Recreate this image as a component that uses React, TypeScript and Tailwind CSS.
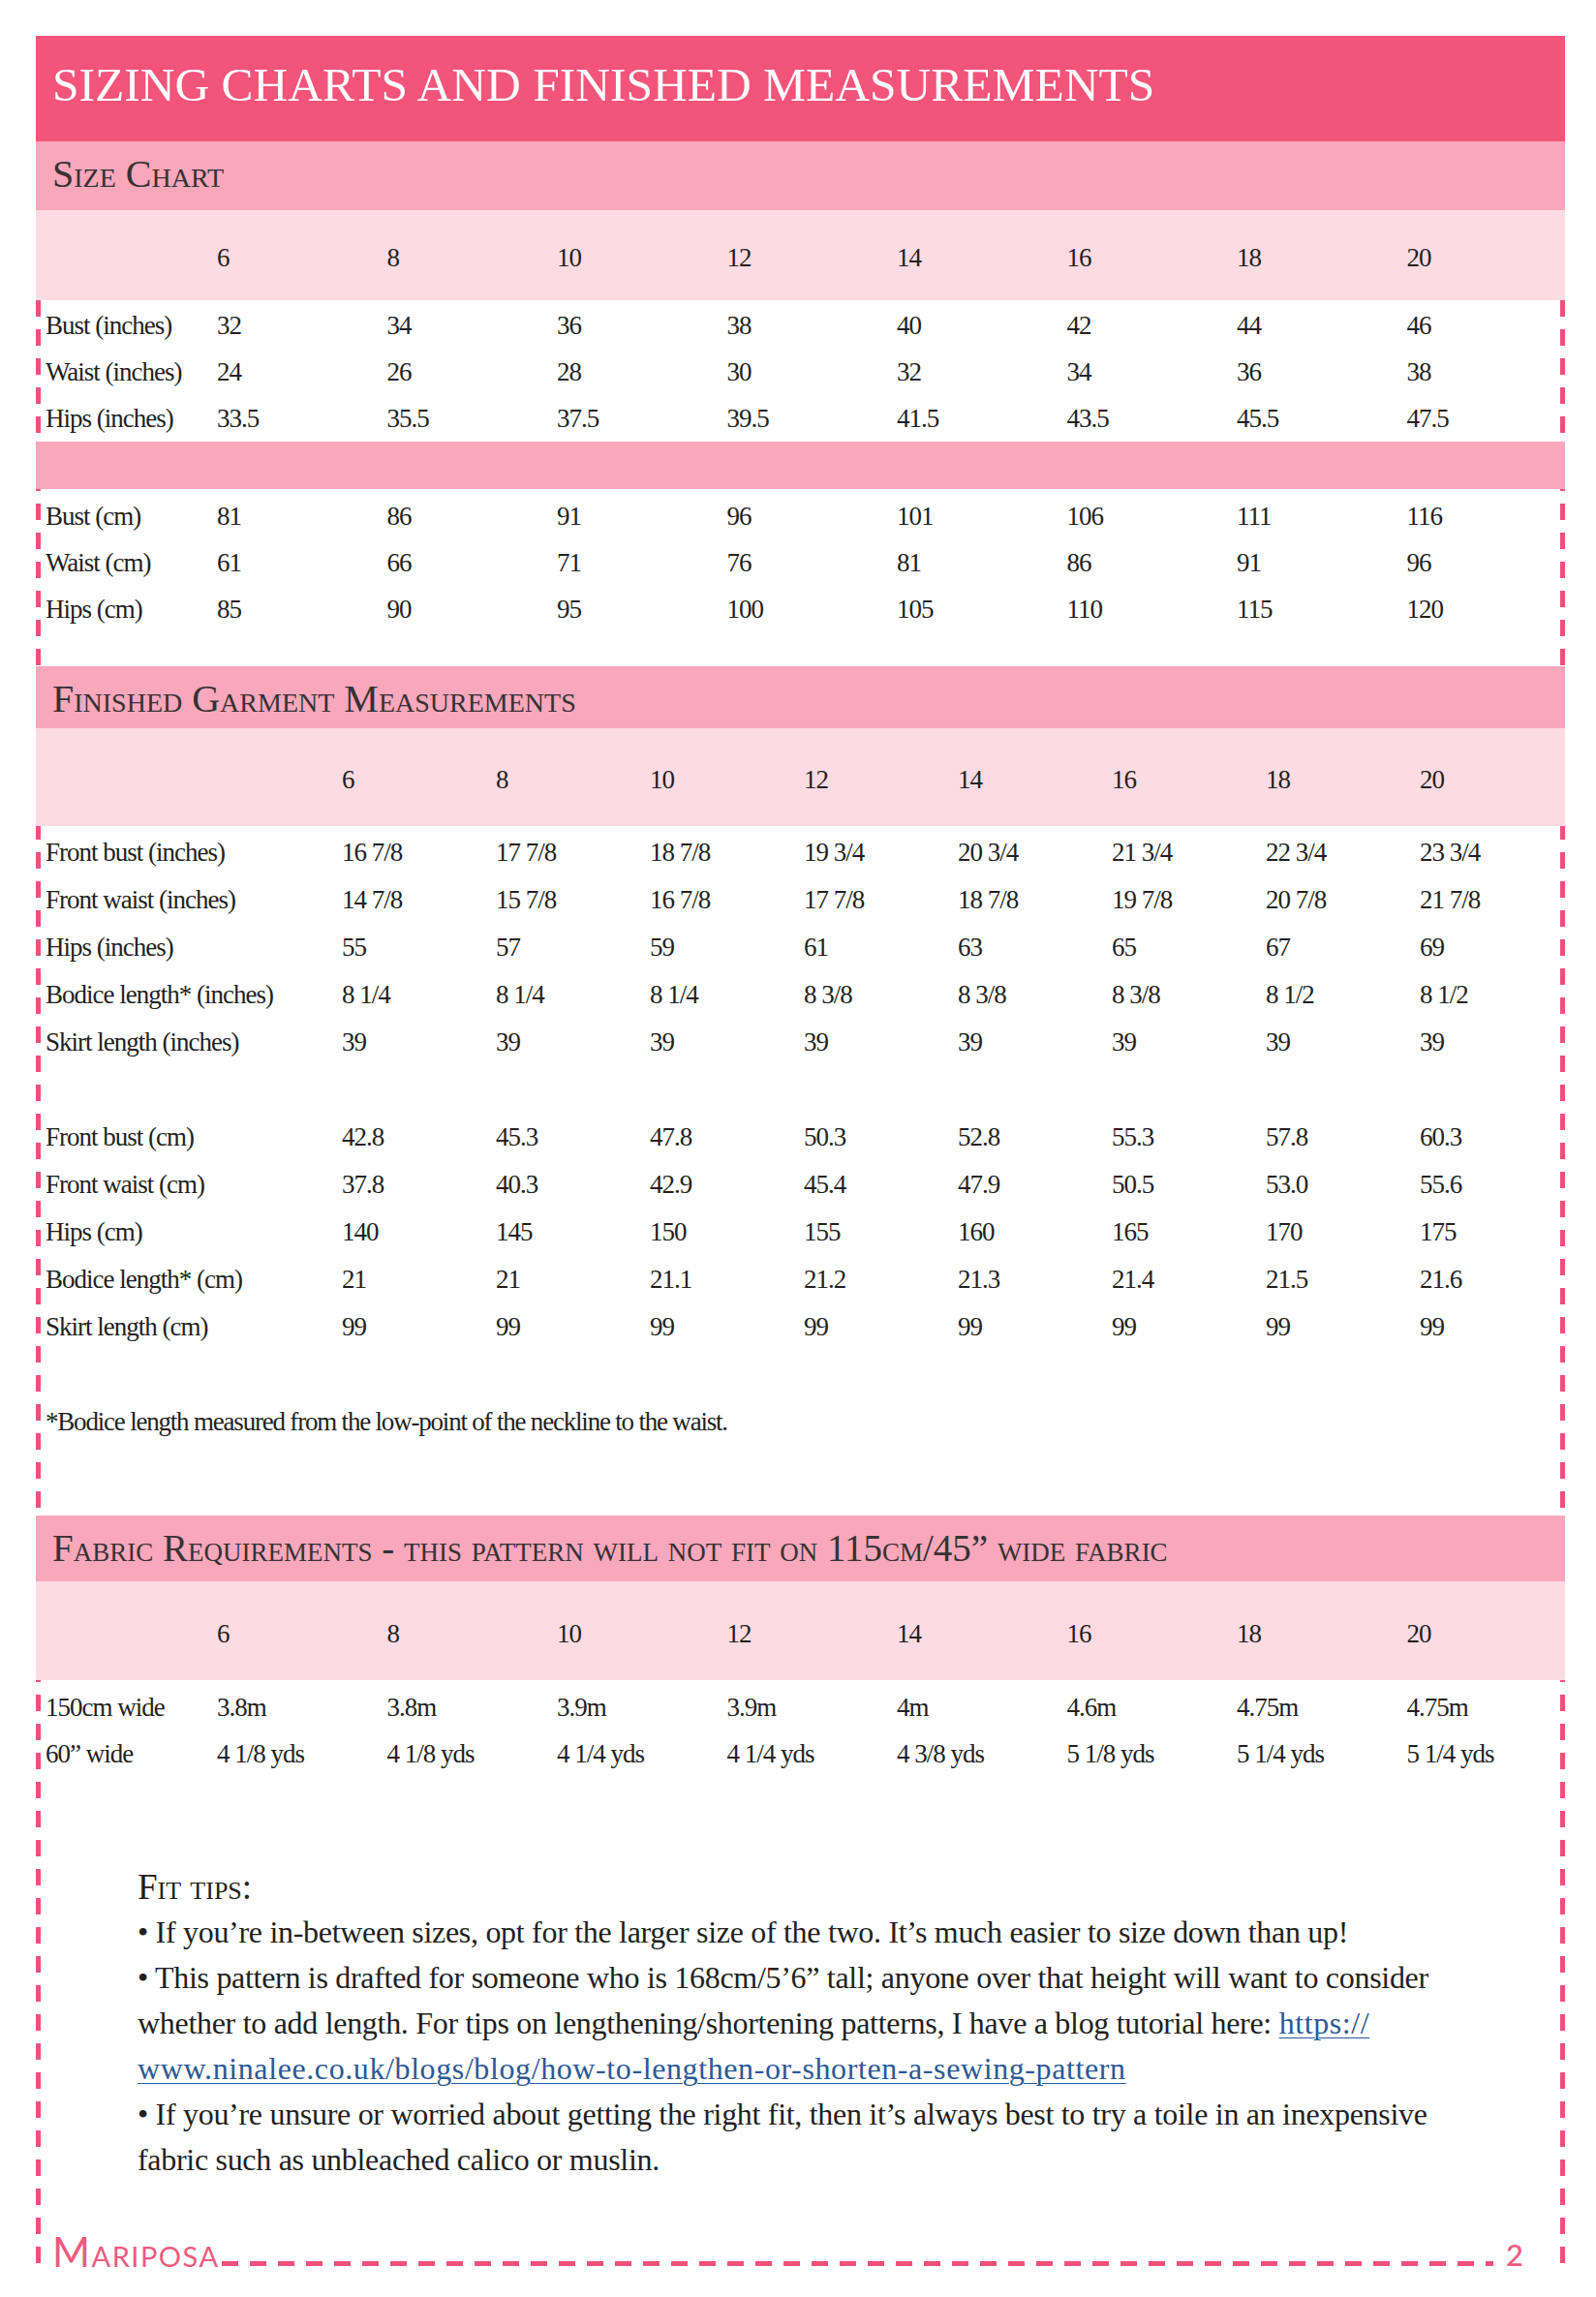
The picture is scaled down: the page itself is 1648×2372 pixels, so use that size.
import React from 'react';

const sizes = ['6', '8', '10', '12', '14', '16', '18', '20'];

const chartCols = 'grid-cols-[187px_repeat(7,175.5px)_1fr]';
const finishedCols = 'grid-cols-[316px_repeat(7,159px)_1fr]';

type Row = { label: string; values: string[] };

const inchRows: Row[] = [
  { label: 'Bust (inches)', values: ['32', '34', '36', '38', '40', '42', '44', '46'] },
  { label: 'Waist (inches)', values: ['24', '26', '28', '30', '32', '34', '36', '38'] },
  { label: 'Hips (inches)', values: ['33.5', '35.5', '37.5', '39.5', '41.5', '43.5', '45.5', '47.5'] },
];

const cmRows: Row[] = [
  { label: 'Bust (cm)', values: ['81', '86', '91', '96', '101', '106', '111', '116'] },
  { label: 'Waist (cm)', values: ['61', '66', '71', '76', '81', '86', '91', '96'] },
  { label: 'Hips (cm)', values: ['85', '90', '95', '100', '105', '110', '115', '120'] },
];

const finishedInches: Row[] = [
  { label: 'Front bust (inches)', values: ['16 7/8', '17 7/8', '18 7/8', '19 3/4', '20 3/4', '21 3/4', '22 3/4', '23 3/4'] },
  { label: 'Front waist (inches)', values: ['14 7/8', '15 7/8', '16 7/8', '17 7/8', '18 7/8', '19 7/8', '20 7/8', '21 7/8'] },
  { label: 'Hips (inches)', values: ['55', '57', '59', '61', '63', '65', '67', '69'] },
  { label: 'Bodice length* (inches)', values: ['8 1/4', '8 1/4', '8 1/4', '8 3/8', '8 3/8', '8 3/8', '8 1/2', '8 1/2'] },
  { label: 'Skirt length (inches)', values: ['39', '39', '39', '39', '39', '39', '39', '39'] },
];

const finishedCm: Row[] = [
  { label: 'Front bust (cm)', values: ['42.8', '45.3', '47.8', '50.3', '52.8', '55.3', '57.8', '60.3'] },
  { label: 'Front waist (cm)', values: ['37.8', '40.3', '42.9', '45.4', '47.9', '50.5', '53.0', '55.6'] },
  { label: 'Hips (cm)', values: ['140', '145', '150', '155', '160', '165', '170', '175'] },
  { label: 'Bodice length* (cm)', values: ['21', '21', '21.1', '21.2', '21.3', '21.4', '21.5', '21.6'] },
  { label: 'Skirt length (cm)', values: ['99', '99', '99', '99', '99', '99', '99', '99'] },
];

const fabricRows: Row[] = [
  { label: '150cm wide', values: ['3.8m', '3.8m', '3.9m', '3.9m', '4m', '4.6m', '4.75m', '4.75m'] },
  { label: '60” wide', values: ['4 1/8 yds', '4 1/8 yds', '4 1/4 yds', '4 1/4 yds', '4 3/8 yds', '5 1/8 yds', '5 1/4 yds', '5 1/4 yds'] },
];

const DataRow = ({ row, cols, height }: { row: Row; cols: string; height: string }) => (
  <div className={`grid ${cols} ${height}`}>
    <span className="whitespace-nowrap pl-[10px]">{row.label}</span>
    {row.values.map((v, i) => (
      <span key={i} className="whitespace-nowrap">{v}</span>
    ))}
  </div>
);

const SizeHeader = ({ cols, height }: { cols: string; height: string }) => (
  <div className={`grid ${cols} ${height} items-center bg-[#fddbe3] pt-[6px] leading-none`}>
    <span />
    {sizes.map((s) => (
      <span key={s}>{s}</span>
    ))}
  </div>
);

const SectionBand = ({ title, className }: { title: string; className: string }) => (
  <div className={`${className} whitespace-nowrap bg-[#f9a7bb] pl-[17px] pt-[14px] leading-none text-[#363233] [font-variant:small-caps]`}>
    {title}
  </div>
);

const linkClass = 'text-[#2c5996] underline decoration-1 underline-offset-[4px] tracking-[0.6px]';

export default function App() {
  return (
    <div className="min-h-[2372px] w-[1648px] bg-white pt-[37px] font-['Liberation_Serif',serif] text-[#231f20]">
      <div className="ml-[37px] w-[1579px] bg-no-repeat [background-image:repeating-linear-gradient(to_bottom,#f0507a_0_17px,transparent_17px_30px),repeating-linear-gradient(to_bottom,#f0507a_0_17px,transparent_17px_30px)] [background-position:0_3px,100%_3px] [background-size:5px_100%]">
        {/* title */}
        <div className="h-[109px] bg-[#f35479] pl-[17px] pt-[26px] text-[49.5px] leading-none whitespace-nowrap text-white">
          SIZING CHARTS AND FINISHED MEASUREMENTS
        </div>

        {/* size chart */}
        <SectionBand title="Size Chart" className="h-[71px] text-[40px]" />
        <div className="text-[27px] tracking-[-1px]">
          <SizeHeader cols={chartCols} height="h-[93px]" />
          <div className="pt-[2px] leading-[48px]">
            {inchRows.map((r) => (
              <DataRow key={r.label} row={r} cols={chartCols} height="h-[48px]" />
            ))}
          </div>
          <div className="h-[49px] bg-[#f9a7bb]" />
          <div className="pt-[4px] leading-[48px]">
            {cmRows.map((r) => (
              <DataRow key={r.label} row={r} cols={chartCols} height="h-[48px]" />
            ))}
          </div>
        </div>

        {/* finished garment */}
        <div className="mt-[35px]">
          <SectionBand title="Finished Garment Measurements" className="h-[64px] text-[40px]" />
        </div>
        <div className="text-[27px] tracking-[-1px]">
          <SizeHeader cols={finishedCols} height="h-[101px]" />
          <div className="pt-[3px] leading-[49px]">
            {finishedInches.map((r) => (
              <DataRow key={r.label} row={r} cols={finishedCols} height="h-[49px]" />
            ))}
            <div className="h-[49px]" />
            {finishedCm.map((r) => (
              <DataRow key={r.label} row={r} cols={finishedCols} height="h-[49px]" />
            ))}
            <div className="h-[49px]" />
            <p className="h-[49px] whitespace-nowrap pl-[10px] tracking-[-1.2px]">
              *Bodice length measured from the low-point of the neckline to the waist.
            </p>
          </div>
        </div>

        {/* fabric */}
        <div className="mt-[72px]">
          <SectionBand
            title="Fabric Requirements - this pattern will not fit on 115cm/45” wide fabric"
            className="h-[68px] text-[39px]"
          />
        </div>
        <div className="text-[27px] tracking-[-1px]">
          <SizeHeader cols={chartCols} height="h-[102px]" />
          <div className="pt-[4px] leading-[48px]">
            {fabricRows.map((r) => (
              <DataRow key={r.label} row={r} cols={chartCols} height="h-[48px]" />
            ))}
          </div>
        </div>

        {/* fit tips */}
        <div className="mt-[90px] pl-[105px] leading-[47px]">
          <div className="text-[37px] [font-variant:small-caps]">Fit tips:</div>
          <div className="whitespace-nowrap text-[32px] tracking-[-0.3px]">
            <div>• If you’re in-between sizes, opt for the larger size of the two. It’s much easier to size down than up!</div>
            <div>• This pattern is drafted for someone who is 168cm/5’6” tall; anyone over that height will want to consider</div>
            <div>
              whether to add length. For tips on lengthening/shortening patterns, I have a blog tutorial here:{' '}
              <a className={linkClass} href="#">https://</a>
            </div>
            <div>
              <a className={linkClass} href="#">
                www.ninalee.co.uk/blogs/blog/how-to-lengthen-or-shorten-a-sewing-pattern
              </a>
            </div>
            <div>• If you’re unsure or worried about getting the right fit, then it’s always best to try a toile in an inexpensive</div>
            <div>fabric such as unbleached calico or muslin.</div>
          </div>
        </div>

        {/* footer */}
        <div className="mt-[50px] flex items-end pl-[17px] pr-[43px] font-['Lato',sans-serif] text-[#ec5b80]">
          <span className="text-[42px] leading-none tracking-[1.5px] [font-variant:small-caps]">Mariposa</span>
          <div className="mb-[6px] ml-[2px] mr-[13px] h-[5px] flex-1 bg-[repeating-linear-gradient(to_right,#f0507a_0_17px,transparent_17px_29px)]" />
          <span className="mb-[2px] text-[31px] font-medium leading-none">2</span>
        </div>
      </div>
    </div>
  );
}
